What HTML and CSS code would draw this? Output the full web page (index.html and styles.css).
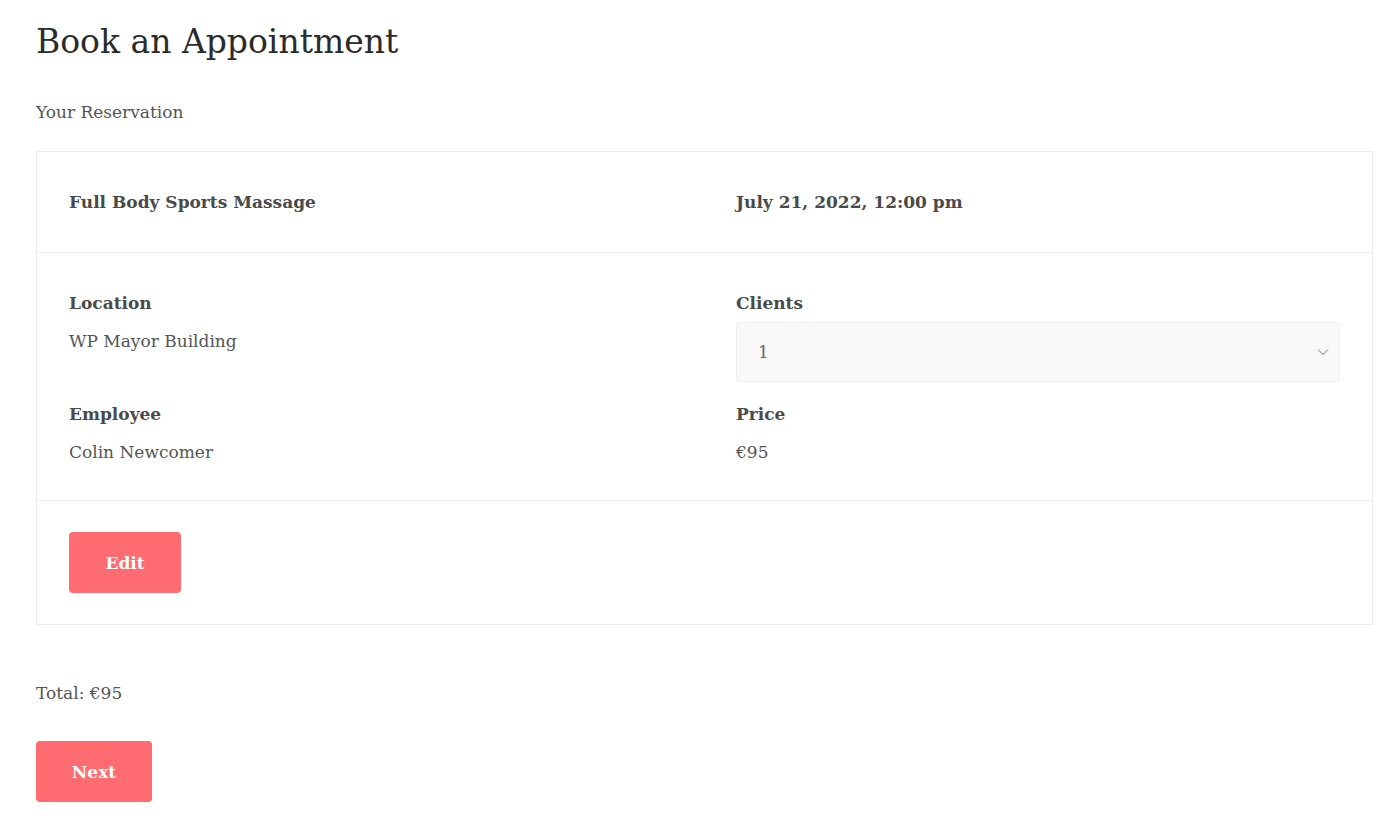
FILE: index.html
```html
<!DOCTYPE html>
<html lang="en">
<head>
<meta charset="utf-8">
<title>Book an Appointment</title>
<link rel="stylesheet" href="styles.css">
</head>
<body>
<main class="page">
  <h1 class="title">Book an Appointment</h1>
  <p class="subtitle">Your Reservation</p>
  <section class="card">
    <div class="card-row row-head">
      <div class="service">Full Body Sports Massage</div>
      <div class="when">July 21, 2022, 12:00 pm</div>
    </div>
    <div class="card-row row-details">
      <div class="field">
        <div class="label">Location</div>
        <div class="value">WP Mayor Building</div>
      </div>
      <div class="field">
        <div class="label">Clients</div>
        <div class="select">
          <span class="select-value">1</span>
          <svg class="chev" width="12" height="8" viewBox="0 0 12 8"><path d="M1 1.5 L6 6.5 L11 1.5" fill="none" stroke="#777" stroke-width="1"/></svg>
        </div>
      </div>
      <div class="field">
        <div class="label">Employee</div>
        <div class="value">Colin Newcomer</div>
      </div>
      <div class="field">
        <div class="label">Price</div>
        <div class="value">€95</div>
      </div>
    </div>
    <div class="card-row row-actions">
      <button class="btn btn-edit">Edit</button>
    </div>
  </section>
  <p class="total">Total: €95</p>
  <button class="btn btn-next">Next</button>
</main>
</body>
</html>
```

FILE: styles.css
```css
html, body {
  margin: 0;
  padding: 0;
  background: #fff;
}
body {
  font-family: "DejaVu Serif", "Liberation Serif", serif;
  color: #555;
}
.page {
  padding: 0 27px 0 36px;
}
.title {
  margin: 0;
  padding-top: 20px;
  font-size: 33px;
  line-height: 44px;
  font-weight: normal;
  color: #2b2b2b;
}
.subtitle {
  margin: 0;
  padding-top: 36px;
  font-size: 17px;
  line-height: 24px;
  color: #555;
}
.card {
  margin-top: 27px;
  border: 1px solid #ececec;
}
.card-row {
  padding: 0 32px;
}
.card-row + .card-row {
  border-top: 1px solid #ececec;
}
.row-head {
  height: 100px;
  display: grid;
  grid-template-columns: 1fr 1fr;
  column-gap: 63px;
  align-items: center;
  font-weight: bold;
  font-size: 17px;
  color: #4a4a4a;
}
.row-details {
  display: grid;
  grid-template-columns: 1fr 1fr;
  column-gap: 63px;
  row-gap: 18px;
  align-items: start;
  padding-top: 36px;
  padding-bottom: 34px;
}
.label {
  font-weight: bold;
  font-size: 17px;
  line-height: 28px;
  color: #4a4a4a;
}
.value {
  margin-top: 10px;
  font-size: 17px;
  line-height: 28px;
  color: #555;
}
.select {
  margin-top: 5px;
  height: 60px;
  box-sizing: border-box;
  background: #f9f9f9;
  border: 1px solid #efefef;
  border-radius: 2px;
  display: flex;
  align-items: center;
  justify-content: space-between;
  padding: 0 10px 0 21px;
}
.select-value {
  font-size: 17px;
  color: #666;
}
.chev {
  display: block;
}
.row-actions {
  padding-top: 31px;
  padding-bottom: 31px;
}
.btn {
  display: block;
  border: none;
  background: #fe6b70;
  color: #fff;
  font-family: "DejaVu Serif", "Liberation Serif", serif;
  font-weight: bold;
  font-size: 17px;
  height: 61px;
  border-radius: 4px;
  cursor: pointer;
}
.btn-edit {
  width: 112px;
}
.total {
  margin: 0;
  padding-top: 56px;
  font-size: 17px;
  line-height: 24px;
  color: #555;
}
.btn-next {
  margin-top: 36px;
  width: 116px;
}
```
